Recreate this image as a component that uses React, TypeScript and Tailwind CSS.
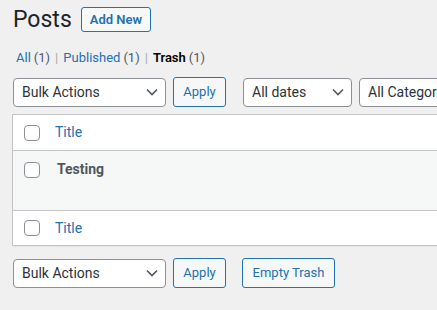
type Filter = { label: string; count: number; current?: boolean }

const filters: Filter[] = [
  { label: "All", count: 1 },
  { label: "Published", count: 1 },
  { label: "Trash", count: 1, current: true },
]

function Chevron() {
  return (
    <svg width="12" height="8" viewBox="0 0 12 8" fill="none" className="shrink-0">
      <path d="M1 1.5l5 5 5-5" stroke="#50575e" strokeWidth="1.6" />
    </svg>
  )
}

function Select({ label, width, chevron = true }: { label: string; width: string; chevron?: boolean }) {
  return (
    <div
      className={`flex shrink-0 items-center justify-between h-[29px] pl-[8px] pr-[7px] bg-white border border-[#8c8f94] rounded-[4px] text-[14px] text-[#2c3338] ${width}`}
    >
      <span className="whitespace-nowrap">{label}</span>
      {chevron && <Chevron />}
    </div>
  )
}

function Button({ children, width }: { children: React.ReactNode; width: string }) {
  return (
    <div
      className={`flex shrink-0 items-center justify-center h-[30px] bg-[#f6f7f7] border border-[#2271b1] rounded-[3px] text-[13px] text-[#2271b1] ${width}`}
    >
      {children}
    </div>
  )
}

function Checkbox() {
  return <div className="w-[16px] h-[16px] shrink-0 bg-white border border-[#8c8f94] rounded-[4px]" />
}

export default function App() {
  return (
    <div
      className="w-[437px] h-[310px] overflow-hidden bg-[#f0f0f1] pl-[12px]"
      style={{ fontFamily: "Roboto, 'Liberation Sans', sans-serif" }}
    >
      {/* Heading */}
      <div className="flex items-center gap-[9px] h-[39px] pl-[1px]">
        <h1 className="text-[23px] text-[#1d2327] font-normal leading-none">Posts</h1>
        <div className="flex items-center h-[25px] px-[8px] border border-[#2271b1] rounded-[3px] bg-[#f6f7f7] text-[13px] font-semibold text-[#2271b1]">
          Add New
        </div>
      </div>

      {/* Status filters */}
      <ul className="flex items-center mt-[9px] h-[20px] pl-[4px] text-[13px] text-[#50575e]">
        {filters.map((f, i) => (
          <li key={f.label} className="flex items-center whitespace-nowrap">
            <span className={f.current ? "font-semibold text-[#000]" : "text-[#2271b1]"}>{f.label}</span>
            <span className="ml-[3px]">({f.count})</span>
            {i < filters.length - 1 && <span className="mx-[5px] text-[#a7aaad]">|</span>}
          </li>
        ))}
      </ul>

      {/* Top nav */}
      <div className="flex items-center mt-[9px] pl-[1px] h-[30px]">
        <Select label="Bulk Actions" width="w-[153px]" />
        <div className="ml-[7px] shrink-0">
          <Button width="w-[53px]">Apply</Button>
        </div>
        <div className="ml-[17px] shrink-0">
          <Select label="All dates" width="w-[109px]" />
        </div>
        <div className="ml-[7px] shrink-0">
          <Select label="All Categories" width="w-[140px]" chevron={false} />
        </div>
      </div>

      {/* Posts table */}
      <div className="mt-[7px] w-[600px] bg-white border border-[#c3c4c7] shadow-[0_1px_1px_rgba(0,0,0,0.04)]">
        <div className="flex items-center h-[36px] pl-[11px] border-b border-[#c3c4c7]">
          <Checkbox />
          <span className="ml-[15px] text-[14px] text-[#2271b1]">Title</span>
        </div>
        <div className="flex items-start h-[59px] pl-[11px] pt-[11px] bg-[#f6f7f7]">
          <Checkbox />
          <span className="ml-[17px] -mt-[3px] text-[14px] font-bold text-[#50575e]">Testing</span>
        </div>
        <div className="flex items-center h-[35px] pl-[11px] border-t border-[#c3c4c7]">
          <Checkbox />
          <span className="ml-[15px] text-[14px] text-[#2271b1]">Title</span>
        </div>
      </div>

      {/* Bottom nav */}
      <div className="flex items-center mt-[12px] pl-[1px] h-[30px]">
        <Select label="Bulk Actions" width="w-[153px]" />
        <div className="ml-[7px]">
          <Button width="w-[53px]">Apply</Button>
        </div>
        <div className="ml-[16px]">
          <Button width="w-[93px]">Empty Trash</Button>
        </div>
      </div>
    </div>
  )
}
